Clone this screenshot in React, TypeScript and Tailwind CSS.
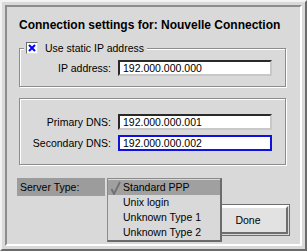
const F = "font-['Liberation_Sans',Arial,sans-serif]";

const Field = ({ label, value, focused }: { label: string; value: string; focused?: boolean }) => (
  <div className="flex items-center gap-[7px]">
    <span className="w-[87px] text-right text-[10.5px] leading-[16px]">{label}</span>
    <div
      className={
        focused
          ? 'w-[154px] h-[16px] bg-white border-2 border-[#1010e0] pl-[3px] text-[10.5px] leading-[12px]'
          : 'w-[154px] h-[16px] bg-white border-2 border-t-[#2a2a2a] border-l-[#2a2a2a] border-r-[#c8c8c8] border-b-[#c8c8c8] pl-[3px] text-[10.5px] leading-[12px]'
      }
    >
      {value}
    </div>
  </div>
);

const MENU = ['Standard PPP', 'Unix login', 'Unknown Type 1', 'Unknown Type 2'];

export default function App() {
  return (
    <div className={`${F} w-[307px] h-[251px] bg-[#d9d9d9] text-black border-2 border-t-[#f2f2f2] border-l-[#f2f2f2] border-r-[#6b6b6b] border-b-[#6b6b6b] p-[3px]`}>
      <div className="h-full border-2 border-t-[#8c8c8c] border-l-[#8c8c8c] border-r-white border-b-white pl-[10px] pt-[11px]">
        <h1 className="ml-[2px] text-[12px] font-bold leading-[14px]">Connection settings for: Nouvelle Connection</h1>

        {/* static IP group */}
        <fieldset className="ml-[2px] mt-[10px] w-[267px] border border-[#8c8c8c] shadow-[inset_1px_1px_0_white,1px_1px_0_white] px-[4px] pt-[6px] pb-[10px]">
          <legend className="flex items-center gap-[7px] pl-[2px] pr-[3px] h-[12px] bg-[#d9d9d9]">
            <span className="w-[12px] h-[12px] bg-white border border-t-[#6b6b6b] border-l-[#6b6b6b] border-r-[#e0e0e0] border-b-[#e0e0e0] flex items-center justify-center">
              <svg width="8" height="8" viewBox="0 0 8 8">
                <path d="M1 1L7 7M7 1L1 7" stroke="#0000ff" strokeWidth="2" />
              </svg>
            </span>
            <span className="text-[10.5px] leading-[12px]">Use static IP address</span>
          </legend>
          <Field label="IP address:" value="192.000.000.000" />
        </fieldset>

        {/* DNS group */}
        <div className="ml-[2px] mt-[11px] w-[267px] border border-[#8c8c8c] shadow-[inset_1px_1px_0_white,1px_1px_0_white] pl-[4px] pt-[15px] pb-[13px] flex flex-col gap-[5px]">
          <Field label="Primary DNS:" value="192.000.000.001" />
          <Field label="Secondary DNS:" value="192.000.000.002" focused />
        </div>

        {/* server type row */}
        <div className="relative mt-[13px] flex items-start">
          <div className="w-[88px] h-[18px] bg-[#9c9c9c] pl-[3px] text-[10.5px] leading-[18px]">Server Type:</div>
          <div className="ml-[101px] mt-[26px] border border-[#6e6e6e] p-[1px] bg-[#d9d9d9] shadow-[inset_1px_1px_0_white]">
            <button className="w-[80px] h-[28px] bg-[#e2e2e2] border-2 border-t-white border-l-white border-r-[#6e6e6e] border-b-[#6e6e6e] text-[10.5px] leading-[24px]">
              Done
            </button>
          </div>

          {/* popup menu */}
          <div className="absolute left-[90px] top-0 w-[115px] bg-[#d9d9d9] border-t border-l border-[#8a8a8a] border-r-2 border-b-2 border-r-[#6b6b6b] border-b-[#6b6b6b] pt-[1px]">
            {MENU.map((m, i) => (
              <div
                key={m}
                className={
                  i === 0
                    ? 'relative h-[15px] pl-[15px] text-[10.5px] leading-[15px] bg-[#a0a0a0]'
                    : 'relative h-[15px] pl-[15px] text-[10.5px] leading-[15px]'
                }
              >
                {i === 0 && (
                  <svg className="absolute left-[2px] top-[1px]" width="11" height="14" viewBox="0 0 11 14">
                    <path d="M1.5 8L4 13L10 1" stroke="#707070" strokeWidth="1.8" fill="none" />
                  </svg>
                )}
                {m}
              </div>
            ))}
          </div>
        </div>
      </div>
    </div>
  );
}
